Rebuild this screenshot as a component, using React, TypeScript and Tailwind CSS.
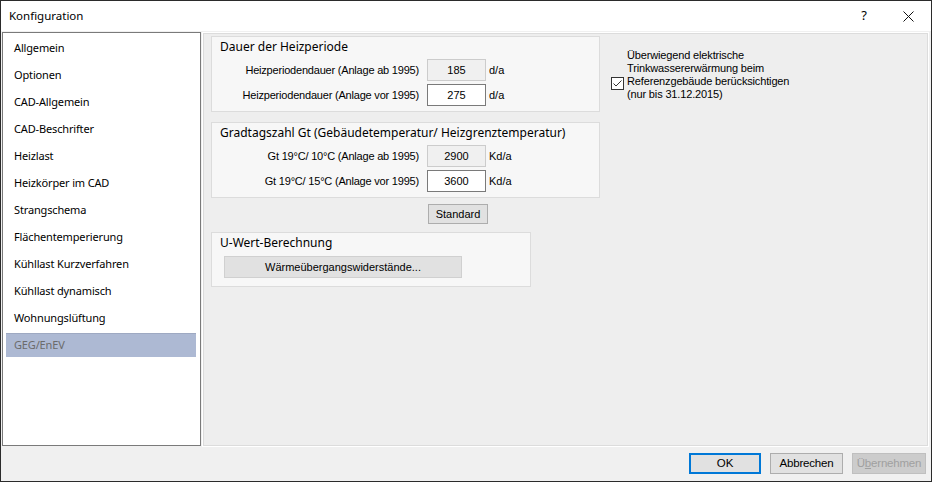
import React from 'react';

const ui = { fontFamily: '"Segoe UI", "Noto Sans", sans-serif' };
const ms = { fontFamily: '"Liberation Sans", Arial, sans-serif' };

const items = [
  'Allgemein',
  'Optionen',
  'CAD-Allgemein',
  'CAD-Beschrifter',
  'Heizlast',
  'Heizkörper im CAD',
  'Strangschema',
  'Flächentemperierung',
  'Kühllast Kurzverfahren',
  'Kühllast dynamisch',
  'Wohnungslüftung',
  'GEG/EnEV',
];

function Field({ label, value, unit, disabled }: { label: string; value: string; unit: string; disabled?: boolean }) {
  return (
    <div className="flex items-center h-[22px]">
      <div className="w-[207px] text-right text-[11px] tracking-[-0.2px] text-black" style={ms}>
        {label}
      </div>
      <div
        className={
          disabled
            ? 'ml-[8px] w-[59px] h-[22px] flex items-center justify-center bg-[#f0f0f0] border border-[#cccccc] text-[11px] text-black'
            : 'ml-[8px] w-[59px] h-[22px] flex items-center justify-center bg-white border border-[#7a7a7a] text-[11px] text-black'
        }
        style={ms}
      >
        {value}
      </div>
      <div className="ml-[3px] text-[11px] text-black" style={ms}>
        {unit}
      </div>
    </div>
  );
}

function GroupBox({ title, className, children }: { title: string; className: string; children: React.ReactNode }) {
  return (
    <div className={'border border-[#dcdcdc] bg-[#f7f7f7] pt-[1px] ' + className}>
      <div className="h-[18px] leading-[18px] pl-[8px] text-[12px] text-black" style={ui}>
        {title}
      </div>
      {children}
    </div>
  );
}

export default function App() {
  return (
    <div className="w-[932px] h-[482px] border border-[#2b2b2b] flex flex-col overflow-hidden bg-[#f0f0f0]">
      {/* title bar */}
      <div className="h-[30px] bg-white flex items-center pl-[8px] shrink-0">
        <span className="text-[11.5px] text-black" style={ui}>
          Konfiguration
        </span>
        <span className="ml-auto mr-[36px] text-[13px] text-black" style={ui}>
          ?
        </span>
        <svg width="11" height="11" viewBox="0 0 11 11" className="mr-[17px]">
          <path d="M0.5 0.5 L10.5 10.5 M10.5 0.5 L0.5 10.5" stroke="#111" strokeWidth="1" />
        </svg>
      </div>

      {/* body */}
      <div className="flex flex-1 flex-col">
        <div className="flex h-[415px] pt-[1px] pl-[1px] gap-[1px]">
          {/* list */}
          <div className="w-[199px] h-[414px] border border-[#7a7a7a] bg-white pt-[3px] pl-[3px] pr-[4px] flex flex-col gap-[3px]">
            {items.map((it, i) => {
              const sel = i === items.length - 1;
              return (
                <div
                  key={it}
                  className={
                    sel
                      ? 'h-[24px] flex items-center pl-[8px] bg-[#adb9d3] text-[#6b6b6b] text-[11px] tracking-[-0.15px] border-t border-[#9ea9c2]'
                      : 'h-[24px] flex items-center pl-[8px] text-black text-[11px] tracking-[-0.15px]'
                  }
                  style={ui}
                >
                  {it}
                </div>
              );
            })}
          </div>

          {/* right panel */}
          <div className="flex-1 mr-[2px] h-[415px] border border-white">
            <div className="h-full border border-[#dcdcdc] bg-[#eeeeee] flex pl-[7px] pt-[2px]">
              <div className="w-[389px] flex flex-col">
                <GroupBox title="Dauer der Heizperiode" className="h-[76px]">
                  <div className="mt-[3px] flex flex-col gap-[3px]">
                    <Field label="Heizperiodendauer (Anlage ab 1995)" value="185" unit="d/a" disabled />
                    <Field label="Heizperiodendauer (Anlage vor 1995)" value="275" unit="d/a" />
                  </div>
                </GroupBox>
                <GroupBox title="Gradtagszahl Gt (Gebäudetemperatur/ Heizgrenztemperatur)" className="h-[76px] mt-[10px]">
                  <div className="mt-[3px] flex flex-col gap-[3px]">
                    <Field label="Gt 19°C/ 10°C (Anlage ab 1995)" value="2900" unit="Kd/a" disabled />
                    <Field label="Gt 19°C/ 15°C (Anlage vor 1995)" value="3600" unit="Kd/a" />
                  </div>
                </GroupBox>
                <button
                  className="mt-[6px] ml-[217px] w-[60px] h-[20px] bg-[#e1e1e1] border border-[#adadad] text-[11px] text-black flex items-center justify-center"
                  style={ms}
                >
                  Standard
                </button>
                <GroupBox title="U-Wert-Berechnung" className="w-[320px] h-[55px] mt-[8px]">
                  <button
                    className="mt-[4px] ml-[12px] w-[238px] h-[22px] bg-[#e1e1e1] border border-[#d0d0d0] text-[11px] text-black flex items-center justify-center"
                    style={ms}
                  >
                    Wärmeübergangswiderstände...
                  </button>
                </GroupBox>
              </div>

              <div className="ml-[11px] mt-[13px] flex items-start gap-[3px]">
                <div className="mt-[28px] w-[13px] h-[13px] border border-[#333333] bg-white flex items-center justify-center shrink-0">
                  <svg width="11" height="11" viewBox="0 0 11 11">
                    <path d="M1.5 5.5 L4 8 L9.5 2.5" fill="none" stroke="#333" strokeWidth="1" />
                  </svg>
                </div>
                <div className="text-[11px] leading-[13px] tracking-[-0.15px] text-black" style={ms}>
                  Überwiegend elektrische
                  <br />
                  Trinkwassererwärmung beim
                  <br />
                  Referenzgebäude berücksichtigen
                  <br />
                  (nur bis 31.12.2015)
                </div>
              </div>
            </div>
          </div>
        </div>

        {/* buttons */}
        <div className="flex justify-end gap-[9px] pt-[7px] pr-[5px]">
          <button
            className="w-[72px] h-[21px] bg-[#e1e1e1] border-2 border-[#0078d7] text-[11.5px] text-black flex items-center justify-center"
            style={ms}
          >
            OK
          </button>
          <button
            className="w-[73px] h-[21px] bg-[#e1e1e1] border border-[#adadad] text-[11.5px] tracking-[-0.2px] text-black flex items-center justify-center"
            style={ms}
          >
            Abbrechen
          </button>
          <button
            className="w-[74px] h-[21px] bg-[#cccccc] border border-[#bfbfbf] text-[11.5px] tracking-[-0.2px] text-[#a0a0a0] flex items-center justify-center"
            style={ms}
          >
            Ü<span className="underline">b</span>ernehmen
          </button>
        </div>
      </div>
    </div>
  );
}
